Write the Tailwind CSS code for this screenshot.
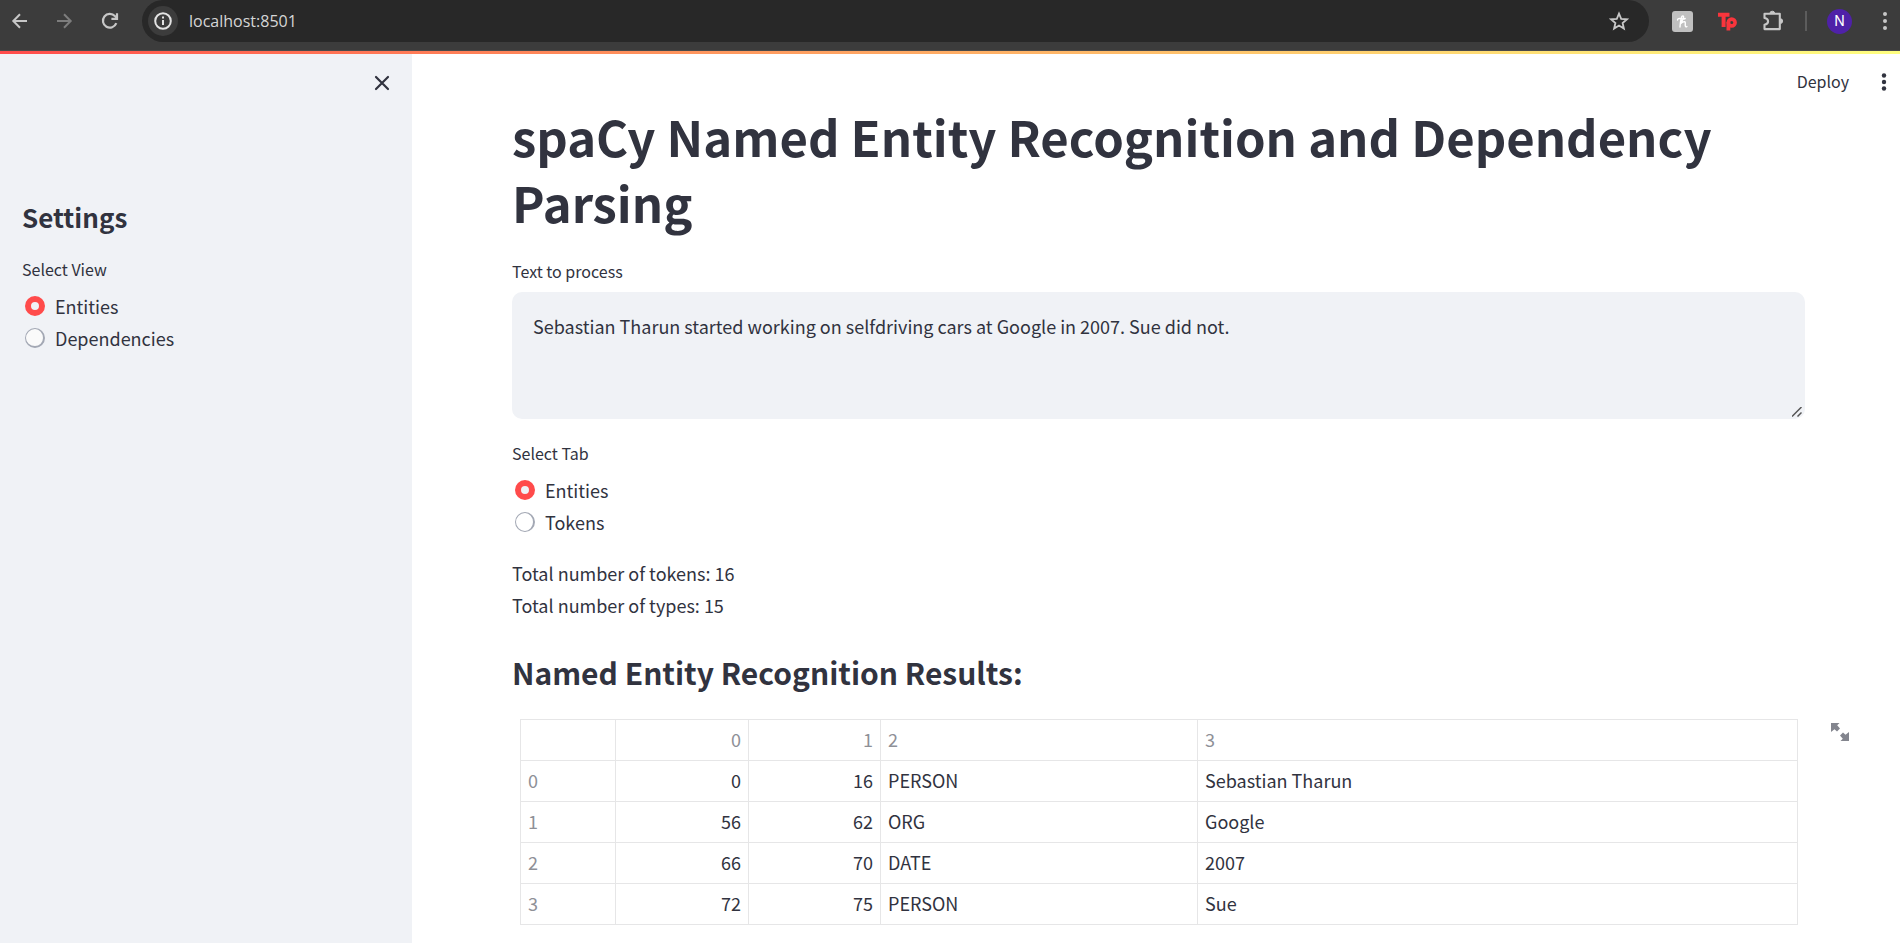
<!DOCTYPE html>
<html lang="en">
<head>
<meta charset="utf-8">
<title>spaCy Named Entity Recognition</title>
<script src="https://cdn.jsdelivr.net/npm/@tailwindcss/browser@4"></script>
</head>
<body class="flex h-screen flex-col overflow-hidden bg-white font-['Noto_Sans_CJK_SC',sans-serif] text-[18px] leading-8 text-[#31333f]">

<!-- Browser toolbar -->
<header class="flex h-[51px] shrink-0 items-start border-b border-[#4a4a4a] bg-[#3c3c3c] pr-3 text-[#c7c7c7]">
  <nav class="flex h-[42px] w-[142px] shrink-0 items-center gap-[25px] pl-[10px]" aria-label="Browser">
    <button aria-label="Back"><svg class="size-5" viewBox="0 0 20 20" fill="none" stroke="currentColor" stroke-width="2"><path d="M17 10H3.500M10 3.300 3.300 10l6.700 6.700"/></svg></button>
    <button aria-label="Forward" class="text-[#7d7d7d]"><svg class="size-5" viewBox="0 0 20 20" fill="none" stroke="currentColor" stroke-width="2"><path d="M2 10h13.500M9 3.300 15.700 10 9 16.700"/></svg></button>
    <button aria-label="Reload"><svg class="size-5" viewBox="0 0 20 20" fill="none" stroke="currentColor" stroke-width="2.200"><path d="M16.300 12.200a6.900 6.900 0 1 1-1.400-7.100L17 7.200"/><path d="M17 2.300v5.600h-5.600"/></svg></button>
  </nav>
  <div class="flex h-[42px] flex-1 items-center rounded-full bg-[#282828] pr-5 pl-[6px]">
    <button aria-label="Site information" class="flex size-[30px] items-center justify-center rounded-full bg-[#3c3c3c] text-[#e3e3e3]"><svg class="size-[18px]" viewBox="0 0 18 18" fill="none" stroke="currentColor" stroke-width="2"><circle cx="9" cy="9" r="7.800"/><path d="M9 8v5M9 4.600v2"/></svg></button>
    <input aria-label="Address" value="localhost:8501" class="ml-[11px] min-w-0 flex-1 bg-transparent font-['Open_Sans',sans-serif] text-[16px] text-[#d6d6d6] outline-none">
    <button aria-label="Bookmark"><svg class="size-5" viewBox="0 0 20 20" fill="none" stroke="currentColor" stroke-width="1.800"><path d="m10 2.600 2.200 5.200 5.700.5-4.300 3.700 1.300 5.600-4.900-3-4.900 3 1.300-5.600-4.300-3.700 5.700-.5z"/></svg></button>
  </div>
  <div class="flex h-[42px] shrink-0 items-center pl-[23px]">
    <button aria-label="Honey extension"><svg class="h-[21px] w-[21px]" viewBox="0 0 21 21"><rect width="21" height="21" rx="3" fill="#c0c0c0"/><path d="M5.500 9c0-1.600 1.800-1.700 3.200-1.300 1.800.5 3.300.4 4.500-.2M8 16c.2-3.500.7-7 1.400-9.600.6-2 2.500-2 2.100-.3-.4 2-1.700 4.300-3 6.700 1.300-1.500 4.600-3.300 4.800-1 .1 1.400-.3 2.600.1 3.500.3.700.9.700 1.500.2" fill="none" stroke="#fff" stroke-width="1.400" stroke-linecap="round"/></svg></button>
    <button aria-label="Tp extension" class="ml-[25px]"><svg class="h-5 w-[19px]" viewBox="0 0 19 20" fill="none" stroke="#f8353c"><path d="M0 3.800h11.500M5.600 3v13" stroke-width="4"/><circle cx="13.700" cy="11.500" r="3.400" stroke-width="3.600"/><path d="M10.400 11v8.500" stroke-width="3.800"/></svg></button>
    <button aria-label="Extensions" class="ml-[25px]"><svg class="size-[22px]" viewBox="0 0 22 22" fill="none" stroke="currentColor" stroke-width="2.100" stroke-linejoin="round"><path d="M2.500 3.800h15.300v15.300H2.500v-4.400q3.600-.6 3.600-3.400t-3.600-3.300z"/><path d="M8 3.200a2.300 2 0 0 1 4.600 0zM18.600 8.800a2 2.300 0 0 1 0 4.600z" fill="currentColor" stroke-width="1"/></svg></button>
    <span class="ml-[21px] h-5 w-[2px] bg-[#5c5c5c]"></span>
    <button aria-label="Profile" class="ml-5 flex size-[25px] items-center justify-center rounded-full bg-[#4f21a8] font-[Inter,sans-serif] text-[14px] leading-none text-white">N</button>
    <button aria-label="Browser menu" class="ml-[30px]"><svg class="h-5 w-[6px]" viewBox="0 0 6 20" fill="currentColor"><circle cx="3" cy="3" r="2"/><circle cx="3" cy="10" r="2"/><circle cx="3" cy="17" r="2"/></svg></button>
  </div>
</header>
<div class="h-[3px] shrink-0 bg-linear-to-r from-[#ff4b4b] to-[#ffff80]"></div>

<div class="flex min-h-0 flex-1">
  <!-- Sidebar -->
  <aside class="w-[412px] shrink-0 bg-[#f0f2f6]">
    <div class="flex justify-end pt-[19px] pr-5">
      <button aria-label="Close sidebar"><svg class="size-5" viewBox="0 0 20 20" fill="none" stroke="currentColor" stroke-width="2.200" stroke-linecap="round"><path d="m4 4 12 12M16 4 4 16"/></svg></button>
    </div>
    <div class="px-[22px] pt-[106px]">
      <h2 class="text-[26px] leading-9 font-semibold">Settings</h2>
      <fieldset class="mt-[22px]">
        <legend class="text-[16px] leading-6">Select View</legend>
        <div class="pt-[9px] pl-[3px]">
          <label class="flex items-center gap-[10px]"><input type="radio" name="view" checked class="size-5 appearance-none rounded-full border border-[#a3a8b4] bg-[#fafafa] checked:border-[6px] checked:border-[#ff4b4b] checked:bg-[#f0f2f6]">Entities</label>
          <label class="flex items-center gap-[10px]"><input type="radio" name="view" class="size-5 appearance-none rounded-full border border-r-2 border-b-2 border-[#a3a8b4] bg-[#fafafa] checked:border-[6px] checked:border-[#ff4b4b]">Dependencies</label>
        </div>
      </fieldset>
    </div>
  </aside>

  <!-- Page -->
  <main class="min-w-0 flex-1">
    <div class="flex h-[49px] items-end justify-end gap-8 pr-[13px]">
      <button class="pb-[10px] text-[16px] leading-6">Deploy</button>
      <button aria-label="Main menu" class="pb-[11px]"><svg class="h-5 w-[6px]" viewBox="0 0 6 20" fill="currentColor"><circle cx="3" cy="3.500" r="2.200"/><circle cx="3" cy="10" r="2.200"/><circle cx="3" cy="16.500" r="2.200"/></svg></button>
    </div>
    <div class="pr-[95px] pl-[100px]">
      <h1 class="text-[49px] leading-[66px] font-bold">spaCy Named Entity Recognition and Dependency Parsing</h1>
      <label for="text" class="mt-6 block text-[16px] leading-6">Text to process</label>
      <div class="relative mt-[9px]">
        <textarea id="text" class="block h-[127px] w-full resize-y rounded-[10px] bg-[#f0f2f6] px-[21px] py-[18px] leading-8 outline-none [&::-webkit-resizer]:bg-transparent">Sebastian Tharun started working on selfdriving cars at Google in 2007. Sue did not.</textarea>
        <svg class="pointer-events-none absolute right-[3px] bottom-[2px] size-[10px]" viewBox="0 0 10 10" stroke="#555" stroke-width="1.500"><path d="M0 9.500 9.500 0M5.500 9.500l4-4"/></svg>
      </div>
      <fieldset class="mt-[22px]">
        <legend class="text-[16px] leading-6">Select Tab</legend>
        <div class="pt-[9px] pl-[3px]">
          <label class="flex items-center gap-[10px]"><input type="radio" name="tab" checked class="size-5 appearance-none rounded-full border border-[#a3a8b4] checked:border-[6px] checked:border-[#ff4b4b] checked:bg-[#f0f2f6]">Entities</label>
          <label class="flex items-center gap-[10px]"><input type="radio" name="tab" class="size-5 appearance-none rounded-full border border-r-2 border-[#a3a8b4] bg-white checked:border-[6px] checked:border-[#ff4b4b]">Tokens</label>
        </div>
      </fieldset>
      <p class="mt-[19px]">Total number of tokens: 16<br>Total number of types: 15</p>
      <h3 class="mt-[30px] text-[30px] leading-[42px] font-semibold">Named Entity Recognition Results:</h3>
      <div class="relative mt-[26px] pr-[7px] pl-2">
        <table class="w-full table-fixed border-collapse text-left [&_td]:h-[41px] [&_td]:border [&_td]:border-[#e6e6e7] [&_td]:px-[7px] [&_td]:pb-[2px] [&_th]:h-[41px] [&_th]:border [&_th]:border-[#e6e6e7] [&_th]:px-[7px] [&_th]:pb-[2px] [&_th]:font-normal [&_th]:text-[#8e9097]">
          <colgroup><col class="w-[95px]"><col class="w-[133px]"><col class="w-[132px]"><col class="w-[317px]"><col></colgroup>
          <thead><tr><td></td><th class="text-right">0</th><th class="text-right">1</th><th>2</th><th>3</th></tr></thead>
          <tbody>
            <tr><th>0</th><td class="text-right">0</td><td class="text-right">16</td><td>PERSON</td><td>Sebastian Tharun</td></tr>
            <tr><th>1</th><td class="text-right">56</td><td class="text-right">62</td><td>ORG</td><td>Google</td></tr>
            <tr><th>2</th><td class="text-right">66</td><td class="text-right">70</td><td>DATE</td><td>2007</td></tr>
            <tr><th>3</th><td class="text-right">72</td><td class="text-right">75</td><td>PERSON</td><td>Sue</td></tr>
          </tbody>
        </table>
        <button aria-label="View fullscreen" class="absolute top-1 -right-11 text-[#83858e]"><svg class="size-[18px]" viewBox="0 0 18 18" fill="currentColor"><path d="M0 0h8.500L6.200 2.300 9 5.600 6 8.600 3.500 6.200 0 9zM18 18H9.500l2.300-2.300L9 12.400l3-3 2.500 2.400L18 9z"/></svg></button>
      </div>
    </div>
  </main>
</div>
</body>
</html>
